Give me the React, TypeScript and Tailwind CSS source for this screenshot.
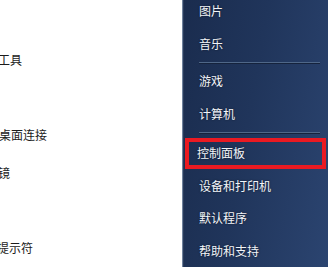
const font = { fontFamily: '"Noto Sans CJK SC", "Microsoft YaHei", sans-serif' };

const leftItems = [
  { label: "", shift: "" },
  { label: "截图工具", shift: "-ml-[26px]" },
  { label: "", shift: "" },
  { label: "远程桌面连接", shift: "-ml-[25px]" },
  { label: "放大镜", shift: "-ml-[26px]" },
  { label: "", shift: "" },
  { label: "命令提示符", shift: "-ml-[27px]" },
];

function Row({ label, h = "h-[35px]" }: { label: string; h?: string }) {
  return (
    <div className={`flex ${h} items-center pl-[15px] text-[12px] text-[#f2f5fa] [text-shadow:0_0_2px_rgba(0,0,0,0.6)]`}>
      {label}
    </div>
  );
}

function Separator() {
  return (
    <div className="ml-[15px] mr-[8px] mt-[1px] flex flex-col">
      <div className="h-px bg-[#4f6788]" />
      <div className="h-px bg-[#15233d]" />
    </div>
  );
}

export default function App() {
  return (
    <div className="flex h-[267px] w-[328px] overflow-hidden bg-white" style={font}>
      <div className="flex w-[182px] flex-col overflow-hidden bg-white pt-[3px]">
        {leftItems.map((item, i) => (
          <div key={i} className="flex h-[38px] items-center">
            <span className={`whitespace-nowrap text-[12px] text-[#1b1b1b] ${item.shift}`}>{item.label}</span>
          </div>
        ))}
      </div>
      <div className="flex flex-1 border-l border-[#6f819c] bg-[linear-gradient(100deg,#1a2c4e_0%,#20355b_45%,#2b4470_100%)]">
        <div className="flex flex-1 flex-col border-l border-[#2a3c5c] -mt-[6px]">
          <Row label="图片" />
          <Row label="音乐" />
          <Separator />
          <Row label="游戏" />
          <Row label="计算机" />
          <Separator />
          <div className="ml-px mr-[2px] mt-[4px] flex h-[32px] items-center border-4 border-[#ea1a22] pl-[8px] pb-[2px] text-[12px] text-[#f2f5fa] [text-shadow:0_0_2px_rgba(0,0,0,0.6)]">
            控制面板
          </div>
          <Row label="设备和打印机" h="h-[34px]" />
          <Row label="默认程序" h="h-[34px]" />
          <Row label="帮助和支持" h="h-[34px]" />
        </div>
      </div>
    </div>
  );
}
